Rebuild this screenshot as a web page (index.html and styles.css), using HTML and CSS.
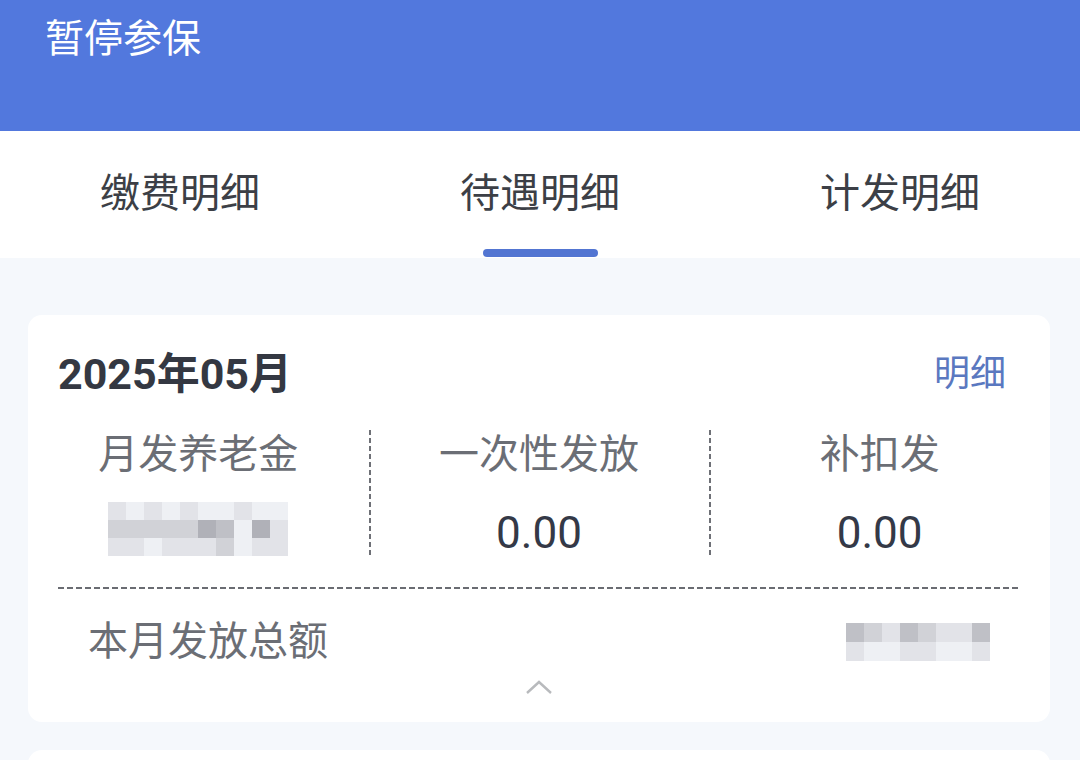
FILE: index.html
```html
<!DOCTYPE html>
<html lang="zh-CN">
<head>
    <meta charset="UTF-8">
    <meta name="viewport" content="width=device-width, initial-scale=1.0">
    <title>待遇明细</title>
    <link rel="stylesheet" href="styles.css">
</head>
<body>
    <header class="top-bar">
        <div class="status">暂停参保</div>
    </header>

    <nav class="tabs">
        <div class="tab">缴费明细</div>
        <div class="tab active">待遇明细</div>
        <div class="tab">计发明细</div>
    </nav>

    <main class="content">
        <section class="card">
            <div class="card-head">
                <div class="month">2025年05月</div>
                <a class="detail-link">明细</a>
            </div>

            <div class="cols">
                <div class="col">
                    <div class="col-label">月发养老金</div>
                    <div class="mosaic mosaic-left">
                        <span class="m1"></span><span class="m0"></span><span class="m1"></span><span class="m0"></span><span class="m1"></span><span class="m0"></span><span class="m0"></span><span class="m1"></span><span class="m0"></span><span class="m0"></span>
                        <span class="m2"></span><span class="m2"></span><span class="m2"></span><span class="m2"></span><span class="m2"></span><span class="m4"></span><span class="m3"></span><span class="m0"></span><span class="m4"></span><span class="m1"></span>
                        <span class="m1"></span><span class="m1"></span><span class="m0"></span><span class="m1"></span><span class="m1"></span><span class="m1"></span><span class="m2"></span><span class="m0"></span><span class="m1"></span><span class="m1"></span>
                    </div>
                </div>
                <div class="col">
                    <div class="col-label">一次性发放</div>
                    <div class="col-value">0.00</div>
                </div>
                <div class="col">
                    <div class="col-label">补扣发</div>
                    <div class="col-value">0.00</div>
                </div>
            </div>

            <div class="total">
                <div class="total-label">本月发放总额</div>
                <div class="mosaic mosaic-right">
                    <span class="m3"></span><span class="m2"></span><span class="m1"></span><span class="m3"></span><span class="m2"></span><span class="m1"></span><span class="m1"></span><span class="m3"></span>
                    <span class="m1"></span><span class="m0"></span><span class="m0"></span><span class="m1"></span><span class="m1"></span><span class="m0"></span><span class="m0"></span><span class="m1"></span>
                </div>
            </div>

            <div class="fold">
                <svg width="28" height="16" viewBox="0 0 28 16">
                    <path d="M2 14 L14 3 L26 14" fill="none" stroke="#b8babd" stroke-width="2.4"/>
                </svg>
            </div>
        </section>

        <section class="card next"></section>
    </main>
</body>
</html>
```

FILE: styles.css
```css
body {
    margin: 0;
    font-family: "Noto Sans CJK SC", "Noto Sans", sans-serif;
    background-color: #f5f8fc;
    overflow: hidden;
}
.top-bar {
    height: 131px;
    background-color: #5278dd;
    box-sizing: border-box;
    padding: 7px 0 0 45px;
}
.status {
    color: #fff;
    font-size: 39px;
    line-height: 56px;
}

/* Tabs */
.tabs {
    display: flex;
    height: 127px;
    background-color: #fff;
}
.tab {
    flex: 1;
    position: relative;
    text-align: center;
    font-size: 40px;
    line-height: 40px;
    padding-top: 39px;
    color: #3c3f46;
}
.tab.active::after {
    content: "";
    position: absolute;
    left: 50%;
    bottom: 1px;
    width: 115px;
    height: 8px;
    margin-left: -57px;
    border-radius: 4px;
    background-color: #5275d2;
}

.content {
    padding: 57px 30px 0 28px;
}
.card {
    background-color: #fff;
    border-radius: 14px;
    padding-top: 27px;
    height: 407px;
    box-sizing: border-box;
}
.card.next {
    margin-top: 28px;
    height: 100px;
}
.card-head {
    display: flex;
    justify-content: space-between;
    align-items: center;
    padding: 0 44px 0 30px;
    height: 56px;
}
.month {
    font-family: "Roboto", "Noto Sans CJK SC", sans-serif;
    font-weight: bold;
    font-size: 43px;
    color: #343842;
}
.detail-link {
    font-size: 36px;
    color: #5a78c0;
}

/* Three columns */
.cols {
    display: flex;
    margin-top: 32px;
}
.col {
    flex: 1;
    height: 127px;
    display: flex;
    flex-direction: column;
    align-items: center;
}
.col + .col {
    background-image: repeating-linear-gradient(to bottom, #6e7076 0 5px, transparent 5px 8px);
    background-size: 2px 100%;
    background-repeat: no-repeat;
}
.col-label {
    font-size: 40px;
    line-height: 48px;
    margin-top: -3px;
    color: #6b6e75;
}
.col-value {
    font-family: "Roboto", sans-serif;
    font-size: 44px;
    line-height: 52px;
    margin-top: 32px;
    color: #343947;
}

/* Pixelated blur of hidden amounts */
.mosaic {
    display: grid;
}
.mosaic span {
    display: block;
}
.mosaic-left {
    grid-template-columns: repeat(10, 18px);
    grid-auto-rows: 18px;
    margin-top: 27px;
}
.mosaic-right {
    grid-template-columns: repeat(8, 18px);
    grid-auto-rows: 19px;
    margin-top: 8px;
}
.m0 { background-color: #eef0f4; }
.m1 { background-color: #e2e3e8; }
.m2 { background-color: #d1d2d7; }
.m3 { background-color: #bfc0c6; }
.m4 { background-color: #b0b1b8; }

.total {
    display: flex;
    justify-content: space-between;
    align-items: center;
    margin: 30px 30px 0 30px;
    padding: 28px 30px 0 30px;
    background-image: repeating-linear-gradient(to right, #6a6c72 0 6px, transparent 6px 9px);
    background-size: 100% 2px;
    background-repeat: no-repeat;
}
.total-label {
    font-size: 40px;
    line-height: 46px;
    color: #6b6e75;
}
.fold {
    display: flex;
    justify-content: center;
    margin-top: 18px;
}
```
